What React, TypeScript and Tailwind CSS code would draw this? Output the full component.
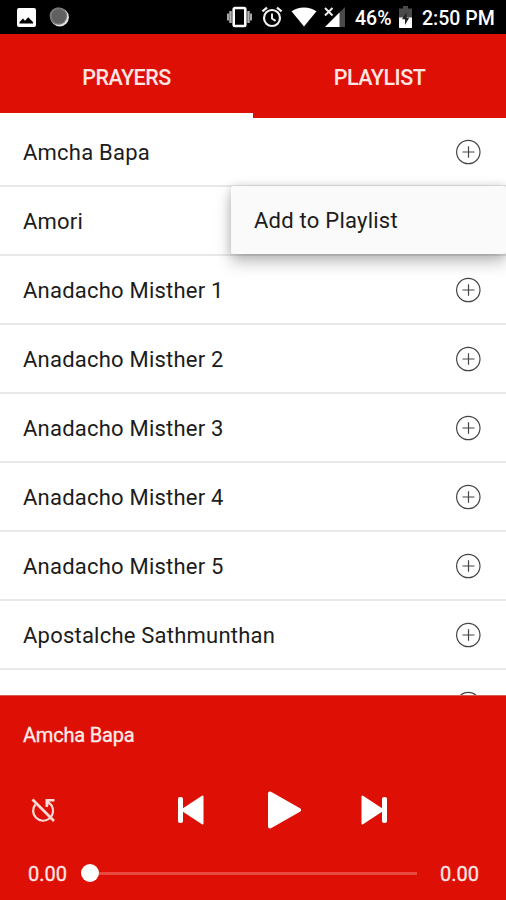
import React, { useState } from 'react';

const prayers = [
  'Amcha Bapa',
  'Amori',
  'Anadacho Misther 1',
  'Anadacho Misther 2',
  'Anadacho Misther 3',
  'Anadacho Misther 4',
  'Anadacho Misther 5',
  'Apostalche Sathmunthan',
  '',
];

const tabs = ['PRAYERS', 'PLAYLIST'];

const StatusBar: React.FC = () => (
  <div className="flex h-[34px] shrink-0 items-center bg-black text-white">
    <svg className="ml-[17px] h-[19px] w-[19px]" viewBox="0 0 19 19">
      <rect width="19" height="19" rx="2" fill="#fff" />
      <path d="M2.5 15.5V14l3.5-3.5 2 2.2 3.2-3.5 4.8 4.8v1.5z" fill="#000" />
    </svg>
    <svg className="ml-[13px] h-[20px] w-[21px]" viewBox="0 0 21 20">
      <circle cx="10.7" cy="10.2" r="9.2" fill="#e4e4e4" />
      <circle cx="9.4" cy="9" r="8.8" fill="#777" />
      <circle cx="9.8" cy="9.2" r="7" fill="#606060" />
    </svg>

    {/* vibrate */}
    <svg className="ml-[156px] h-[22px] w-[26px]" viewBox="0 0 26 22">
      <rect x="7.7" y="2" width="11.6" height="18" rx="1.2" fill="none" stroke="#fff" strokeWidth="2.6" />
      <path d="M4.5 5v12M22.5 5v12" stroke="#b5b5b5" strokeWidth="2.4" />
      <path d="M2 7.5v7M25 7.5v7" stroke="#a5a5a5" strokeWidth="2" />
    </svg>
    {/* alarm */}
    <svg className="ml-[9px] h-[22px] w-[22px]" viewBox="0 0 22 22" fill="none" stroke="#f2f2f2">
      <circle cx="11" cy="12" r="8" strokeWidth="2.2" />
      <path d="M11 7.5v5l3.6 2.4" strokeWidth="1.9" />
      <path d="M1.4 5.4 6 1.6M20.6 5.4 16 1.6" strokeWidth="2.2" />
    </svg>
    {/* wifi */}
    <svg className="ml-[8px] h-[20px] w-[26px]" viewBox="0 0 26 20">
      <path d="M.5 4.2C4 1.7 8.3.4 13 .4s9 1.3 12.5 3.8L13 19.6z" fill="#fff" />
    </svg>
    {/* mobile signal */}
    <svg className="ml-[7px] h-[20px] w-[21px]" viewBox="0 0 21 20">
      <path d="M1 20 21 0v20z" fill="#4a4a4a" />
      <path d="M1 20 15.5 5.5V20z" fill="#fff" />
      <path d="m1 1 7.5 7.5m0-7.5L1 8.5" stroke="#eee" strokeWidth="2" />
    </svg>
    <span className="ml-[10px] w-[44px] pt-[3px] text-[19.5px] font-medium leading-none whitespace-nowrap">46%</span>
    {/* battery */}
    <svg className="h-[22px] w-[13px]" viewBox="0 0 13 22">
      <path d="M4 0h5v2.5h4V22H0V2.5h4z" fill="#4a4a4a" />
      <path d="M0 11.5h13V21a1 1 0 0 1-1 1H1a1 1 0 0 1-1-1z" fill="#fff" />
      <path d="M7.5 6 3 13.2h3V19l4.2-7.2H7.500z" fill="#222" />
    </svg>
    <span className="ml-[10px] pt-[3px] text-[19.5px] font-medium leading-none whitespace-nowrap">2:50 PM</span>
  </div>
);

const AddIcon: React.FC = () => (
  <svg className="h-[26px] w-[26px]" viewBox="0 0 26 26" fill="none" stroke="#444" strokeWidth="1.2">
    <circle cx="13.3" cy="13" r="11.7" />
    <path d="M13.5 7.2v11.6M7.5 13h12" />
  </svg>
);

const Player: React.FC<{ title: string }> = ({ title }) => (
  <div className="flex h-[205px] shrink-0 flex-col border-t border-[#d9584f] bg-[#de1005] text-white">
    <div className="pl-[23px] pt-[27px] text-[20px] leading-[24px] tracking-[-0.2px] text-[#ffeceb] [-webkit-text-stroke:0.3px]">
      {title}
    </div>
    <div className="mt-[42px] flex h-[42px] items-center">
      {/* repeat off */}
      <svg className="ml-[31px] h-[25px] w-[25px]" viewBox="0 0 25 25" fill="none" stroke="#ffdcd8" strokeWidth="2.2">
        <path d="M4.3 6.5a10 10 0 1 0 16.200.8L16 3" />
        <path d="M1.500 1.500 23 23" strokeWidth="2.6" />
        <path d="M14.500 1h9v2.500H18L17 9h-2.500z" fill="#ffdcd8" stroke="none" />
      </svg>
      <svg className="ml-[121px] h-[30px] w-[28px]" viewBox="0 0 28 30" fill="#fff">
        <rect x="1" y="2" width="5" height="26" rx="2" />
        <path d="M25.5 1.5v27L5 15z" stroke="#fff" strokeWidth="2" strokeLinejoin="round" />
      </svg>
      <svg className="ml-[62px] h-[38px] w-[36px]" viewBox="0 0 36 38" fill="#fff">
        <path d="M3 2.5v33L32 19z" stroke="#fff" strokeWidth="4" strokeLinejoin="round" />
      </svg>
      <svg className="ml-[57px] h-[30px] w-[28px]" viewBox="0 0 28 30" fill="#fff">
        <path d="M2.5 1.5v27L23 15z" stroke="#fff" strokeWidth="2" strokeLinejoin="round" />
        <rect x="22" y="2" width="5" height="26" rx="2" />
      </svg>
    </div>
    <div className="mt-[30px] flex h-[24px] items-center text-[20px] text-[#ffe6e4]">
      <span className="ml-[28px] w-[53px] pt-[2px] leading-none [-webkit-text-stroke:0.3px]">0.00</span>
      <div className="flex w-[336px] items-center">
        <div className="h-[18px] w-[18px] rounded-full bg-white" />
        <div className="h-[3px] flex-1 bg-[#e94a40]" />
      </div>
      <span className="ml-[23px] pt-[2px] leading-none [-webkit-text-stroke:0.3px]">0.00</span>
    </div>
  </div>
);

export default function App() {
  const [activeTab, setActiveTab] = useState('PRAYERS');
  const [menuFor, setMenuFor] = useState(0);

  return (
    <div className="flex h-[900px] w-[506px] flex-col overflow-hidden bg-white font-['Roboto',sans-serif]">
      <StatusBar />

      <div className="flex h-[84px] shrink-0 bg-[#de1005]">
        {tabs.map(tab => (
          <button
            key={tab}
            onClick={() => setActiveTab(tab)}
            className={`flex-1 border-b-[5px] pt-[9px] text-[21.5px] font-medium tracking-[-0.5px] text-[#ffe6e4] ${
              activeTab === tab ? 'border-white' : 'border-transparent'
            }`}
          >
            {tab}
          </button>
        ))}
      </div>

      <div className="min-h-0 flex-1 overflow-hidden">
        {prayers.map((prayer, i) => (
          <div
            key={i}
            className="relative flex h-[69px] items-center justify-between border-b-2 border-[#e8e8e8] pl-[23px] pr-[25px]"
          >
            <span className="pt-[2px] text-[22px] tracking-[0.22px] text-[#1c1c1c]">{prayer}</span>
            <button onClick={() => setMenuFor(i)}>
              <AddIcon />
            </button>
            {menuFor === i && (
              <div className="absolute left-[231px] top-[68px] z-10 flex h-[68px] w-[275px] items-center rounded-[2px] bg-[#fafafa] pl-[23px] pt-px text-[22px] tracking-[0.24px] text-[#1c1c1c] shadow-[0_8px_16px_rgba(0,0,0,0.26),0_0_10px_rgba(0,0,0,0.14)]">
                Add to Playlist
              </div>
            )}
          </div>
        ))}
      </div>

      <Player title="Amcha Bapa" />
    </div>
  );
}
